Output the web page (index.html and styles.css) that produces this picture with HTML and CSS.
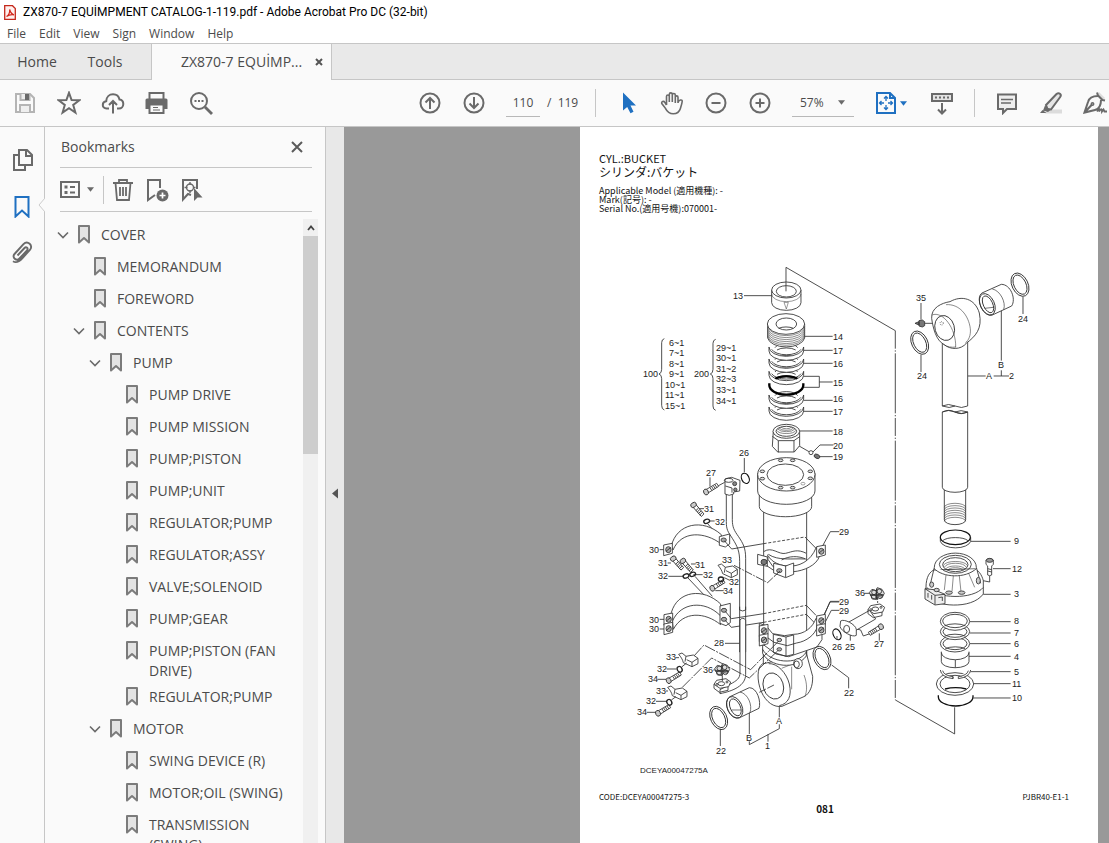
FILE: index.html
```html
<!DOCTYPE html>
<html lang="en">
<head>
<meta charset="utf-8">
<title>ZX870-7 EQUİMPMENT CATALOG-1-119.pdf - Adobe Acrobat Pro DC (32-bit)</title>
<link rel="stylesheet" href="styles.css">
</head>
<body>
<svg class="defs" aria-hidden="true">
  <symbol id="bm" viewBox="0 0 12 19"><path d="M1 1h10v16.5L6 13l-5 4.500z" fill="#e3e3e3" stroke="#7b7b7b" stroke-width="2" stroke-linejoin="round"/></symbol>
  <symbol id="chev" viewBox="0 0 12 8"><path d="M1 1.500l5 5 5-5" fill="none" stroke="#6a6a6a" stroke-width="1.600"/></symbol>
  <symbol id="caret" viewBox="0 0 8 5"><path d="M0 0h8L4 5z" fill="currentColor"/></symbol>
</svg>

<header class="titlebar">
  <svg class="appicon" viewBox="0 0 12 15"><path d="M.7.7h7.800l2.800 2.800v10.800H.7z" fill="#fff0ee" stroke="#c5281c" stroke-width="1.300"/><path d="M2.500 11.500c2-1 3.300-4.200 3.200-7 .8 3 2 4.800 4.300 5.300C7.500 9.300 5 9.800 2.500 11.500z" fill="none" stroke="#d3281c" stroke-width="1.200"/></svg>
  <span>ZX870-7 EQUİMPMENT CATALOG-1-119.pdf - Adobe Acrobat Pro DC (32-bit)</span>
</header>
<nav class="menubar">
  <button>File</button><button>Edit</button><button>View</button><button>Sign</button><button>Window</button><button>Help</button>
</nav>
<div class="tabs">
  <button class="tab home">Home</button><button class="tab tools">Tools</button>
  <div class="tab active"><span>ZX870-7 EQUİMP...</span><button aria-label="Close tab"><svg width="8" height="8" viewBox="0 0 8 8"><path d="M1 1l6 6M7 1L1 7" stroke="#555" stroke-width="2"/></svg></button></div>
</div>

<div class="toolbar">
  <div class="group files">
    <button aria-label="Save"><svg viewBox="0 0 24 24"><g fill="none" stroke="#b4b4b4" stroke-width="2"><path d="M3 3h14l4 4v14H3z"/><path d="M7.500 3v6h9V3M7 21v-7h10v7" fill="#eee"/></g><path d="M13 4h2v4h-2z" fill="#b4b4b4"/></svg></button>
    <button aria-label="Favorite"><svg viewBox="0 0 24 24"><path d="M12 1.800l2.600 7.300 7.800.2-6.200 4.700 2.200 7.500-6.400-4.400-6.400 4.400L7.800 14 1.600 9.300l7.800-.2z"/></svg></button>
    <button aria-label="Upload"><svg viewBox="0 0 24 24"><path d="M8 17.500H5.500C3 17.500 1.800 15.700 1.800 14c0-2 1.500-3.600 3.400-3.800C5.400 6 8.300 3.300 12 3.300c3.300 0 5.900 2.200 6.500 5.200 2.200.3 3.800 2.100 3.800 4.500 0 2.600-2 4.500-4.300 4.500h-2M12 22.500V10.500M8 14l4-4 4 4"/></svg></button>
    <button aria-label="Print"><svg viewBox="0 0 24 24"><path d="M4.500 8V2h14v6"/><path d="M2 7.500h19q1.500 0 1.500 1.500v9h-22V9q0-1.500 1.500-1.500z" fill="#6a6a6a" stroke="none"/><path d="M4.500 13.500h14V22h-14z" fill="#fafafa"/><path d="M8 16.500h5M8 19h7" stroke-width="1"/></svg></button>
    <button aria-label="Search"><svg viewBox="0 0 24 24"><circle cx="10" cy="10" r="8"/><path d="M16 16l7 7" stroke-width="2.800"/><path d="M5.500 10h2M9 10h2M12.500 10h2"/></svg></button>
  </div>
  <div class="group pages">
    <button aria-label="Previous page"><svg viewBox="0 0 24 24"><circle cx="12" cy="12" r="9.500"/><path d="M12 18V7M7.500 11.500L12 7l4.500 4.500"/></svg></button>
    <button aria-label="Next page"><svg viewBox="0 0 24 24"><circle cx="12" cy="12" r="9.500"/><path d="M12 6v11M7.500 12.500L12 17l4.500-4.500"/></svg></button>
    <input class="pageno" aria-label="Page number" value="110"><span class="total">/&nbsp; 119</span>
  </div>
  <div class="group view">
    <button aria-label="Select"><svg viewBox="0 0 24 24"><path d="M7 1.500v18l4.200-3.600 3.300 6.300 3-1.500-3-6.200h5.500z" fill="#1f70c1" stroke="none"/></svg></button>
    <button aria-label="Pan"><svg viewBox="0 0 24 24"><path d="M6.500 14V5.500c0-2 2.800-2 2.800 0V11 3.500c0-2.200 3-2.200 3 0V11 4c0-2 3-2 3 0v8V6.300c0-1.900 2.700-1.900 2.700 0V12c.3-3.500 4.500-4 4.200-1.500-.2 2-1 4.500-1.800 7-1 3.300-3.300 5.300-7.200 5.300-4.400 0-6.300-2.500-7.900-5.700L1.800 12.500c-.8-2 2-2.800 3-1.200l1.700 2.700" stroke-width="1.600"/></svg></button>
    <button aria-label="Zoom out"><svg viewBox="0 0 24 24"><circle cx="12" cy="12" r="9.500"/><path d="M7.500 12h9"/></svg></button>
    <button aria-label="Zoom in"><svg viewBox="0 0 24 24"><circle cx="12" cy="12" r="9.500"/><path d="M7.500 12h9M12 7.500v9"/></svg></button>
    <div class="zoom"><select aria-label="Zoom level"><option>57%</option></select><svg><use href="#caret"/></svg></div>
    <button class="fit" aria-label="Fit page"><svg viewBox="0 0 24 24"><path d="M3 2h13l5 5v15H3z"/><path d="M16 2v5h5"/><path d="M12 6v4M12 14v4M6 12h4M14 12h4M10 7.500l2-2 2 2M10 16.500l2 2 2-2M7.500 10l-2 2 2 2M16.500 10l2 2-2 2" stroke-width="1.300"/></svg><svg class="caret"><use href="#caret"/></svg></button>
    <button class="scroll" aria-label="Scrolling"><svg viewBox="0 0 24 24"><path d="M2 3h20v7H2z" fill="#e3e3e3"/><path d="M5 6.500h2M9 6.500h2M13 6.500h2M17 6.500h2M12 12v10M8 18.500l4 4 4-4"/></svg></button>
  </div>
  <div class="group notes">
    <button aria-label="Comment"><svg viewBox="0 0 24 24"><path d="M3 3.500h18V18h-9l-4 4v-4H3z" fill="#eee"/><path d="M6 8.500h12M6 12h10" stroke-width="1.400"/></svg></button>
    <button aria-label="Highlight"><svg viewBox="0 0 24 24"><path d="M8 18.500h15v4H6z" fill="#dcdcdc" stroke="none"/><path d="M7 14L17.500 3c2.500-2 5.500.5 3.700 3L12 18.500 8.500 18z" fill="#e6e6e6"/><path d="M6 14.500l5.500 4.500-2.500 2-5-1.500zM3.500 19l4 3H1z" fill="#6a6a6a" stroke="none"/></svg></button>
    <button aria-label="Sign"><svg viewBox="0 0 24 24"><path d="M13 4l3-3 6 6-3 3z" fill="#ddd" stroke="none"/><path d="M14 1.500l1 3 4.500 4.500 2.500.5M15 5c-6 0-9 2-10 6L1.500 21.500 12 19c4-1 6-4 6-10M2 21l7-7.500"/><circle cx="9.500" cy="13" r="1.200" stroke-width="1.500"/><path d="M14 20.500c2-4 3-3 2 0 2-3 3-3 3 0l1.500-2 1 2h2.500" stroke-width="1.800"/></svg></button>
  </div>
</div>

<main>
  <aside class="rail">
    <button aria-label="Page thumbnails"><svg viewBox="0 0 24 24"><path d="M9 2h8l5 5v10H9z"/><path d="M16 2v6h6M9 7H4v15h11v-4"/></svg></button>
    <button class="on" aria-label="Bookmarks"><svg viewBox="0 0 24 24"><path d="M5.500 3h13v19.500L12 16.500l-6.500 6z"/></svg></button>
    <button aria-label="Attachments"><svg viewBox="0 0 24 24"><path d="M7.500 15.500l7-7.500c1.800-1.900 4.300.4 2.500 2.300L9.500 18.500c-3 3.200-8-1.200-5-4.500l9-9.800c4-4.200 10.300 1.300 6.400 5.700L12.500 18c-5 5.500-7.500 4.500-9.500 3.200" stroke-width="1.900"/></svg></button>
  </aside>
  <section class="panel">
    <svg class="notch" viewBox="0 0 7 14"><path d="M7 0L1 7l6 7" fill="#fafafa" stroke="#ccc"/></svg>
    <div class="phead"><h2>Bookmarks</h2><button aria-label="Close panel"><svg viewBox="0 0 12 12"><path d="M1 1l10 10M11 1L1 11"/></svg></button></div>
    <div class="ptools">
      <button aria-label="Options"><svg class="opt" viewBox="0 0 20 18"><path d="M1 1h18v15H1z"/><path d="M10 6h5M10 11.500h5"/><path d="M4.500 4.500h3v3h-3zM4.500 10h3v3h-3z" fill="#6a6a6a" stroke="none"/></svg><svg class="caret"><use href="#caret"/></svg></button>
      <i></i>
      <button aria-label="Delete"><svg viewBox="0 0 24 24"><path d="M2 5h20M8 5V2h8v3M4.500 5l1.500 17h12l1.500-17M9 9v9M12 9v9M15 9v9" stroke-width="1.800"/></svg></button>
      <button aria-label="New bookmark"><svg viewBox="0 0 24 24"><path d="M10 17l-7 5V2h12v8"/><circle cx="17.500" cy="17.500" r="6" fill="#6a6a6a" stroke="none"/><path d="M14.500 17.500h6M17.500 14.500v6" stroke="#fff" stroke-width="1.700"/></svg></button>
      <button aria-label="Find bookmark"><svg viewBox="0 0 24 24"><path d="M12 17l-3-1-5 5.500V2h14v9"/><circle cx="11" cy="9.500" r="3.500" stroke-width="1.400"/><path d="M11 4v3M11 12v3M5.500 9.500h3M14 9.500h2.500" stroke-width="1.400"/><path d="M15 10v13l3.500-3.500h5z" fill="#6a6a6a" stroke="none"/></svg></button>
    </div>
    <div class="scroller">
      <ul class="tree">
        <li><div class="row"><svg class="chev"><use href="#chev"/></svg><svg class="bm"><use href="#bm"/></svg><span>COVER</span></div>
          <ul>
            <li><div class="row leaf"><svg class="bm"><use href="#bm"/></svg><span>MEMORANDUM</span></div></li>
            <li><div class="row leaf"><svg class="bm"><use href="#bm"/></svg><span>FOREWORD</span></div></li>
            <li><div class="row"><svg class="chev"><use href="#chev"/></svg><svg class="bm"><use href="#bm"/></svg><span>CONTENTS</span></div>
              <ul>
                <li><div class="row"><svg class="chev"><use href="#chev"/></svg><svg class="bm"><use href="#bm"/></svg><span>PUMP</span></div>
                  <ul>
                    <li><div class="row leaf"><svg class="bm"><use href="#bm"/></svg><span>PUMP DRIVE</span></div></li>
                    <li><div class="row leaf"><svg class="bm"><use href="#bm"/></svg><span>PUMP MISSION</span></div></li>
                    <li><div class="row leaf"><svg class="bm"><use href="#bm"/></svg><span>PUMP;PISTON</span></div></li>
                    <li><div class="row leaf"><svg class="bm"><use href="#bm"/></svg><span>PUMP;UNIT</span></div></li>
                    <li><div class="row leaf"><svg class="bm"><use href="#bm"/></svg><span>REGULATOR;PUMP</span></div></li>
                    <li><div class="row leaf"><svg class="bm"><use href="#bm"/></svg><span>REGULATOR;ASSY</span></div></li>
                    <li><div class="row leaf"><svg class="bm"><use href="#bm"/></svg><span>VALVE;SOLENOID</span></div></li>
                    <li><div class="row leaf"><svg class="bm"><use href="#bm"/></svg><span>PUMP;GEAR</span></div></li>
                    <li><div class="row leaf"><svg class="bm"><use href="#bm"/></svg><span>PUMP;PISTON (FAN DRIVE)</span></div></li>
                    <li><div class="row leaf"><svg class="bm"><use href="#bm"/></svg><span>REGULATOR;PUMP</span></div></li>
                  </ul></li>
                <li><div class="row"><svg class="chev"><use href="#chev"/></svg><svg class="bm"><use href="#bm"/></svg><span>MOTOR</span></div>
                  <ul>
                    <li><div class="row leaf"><svg class="bm"><use href="#bm"/></svg><span>SWING DEVICE (R)</span></div></li>
                    <li><div class="row leaf"><svg class="bm"><use href="#bm"/></svg><span>MOTOR;OIL (SWING)</span></div></li>
                    <li><div class="row leaf"><svg class="bm"><use href="#bm"/></svg><span>TRANSMISSION (SWING)</span></div></li>
                  </ul></li>
              </ul></li>
          </ul></li>
      </ul>
      <div class="bar"><div class="up"><svg viewBox="0 0 8 6"><path d="M1 5l3-3.500L7 5" fill="none" stroke="#444" stroke-width="1.800"/></svg></div><div class="thumb"></div></div>
    </div>
  </section>
  <button class="collapse" aria-label="Collapse panel"><svg viewBox="0 0 6 10"><path d="M6 0v10L0 5z" fill="#555"/></svg></button>
  <section class="canvas">
    <article class="page">
      <h1>CYL.:BUCKET</h1>
      <p class="jp" lang="ja">シリンダ:バケット</p>
      <p class="meta first" lang="ja">Applicable Model (適用機種): -</p>
      <p class="meta" lang="ja">Mark(記号): -</p>
      <p class="meta" lang="ja">Serial No.(適用号機):070001-</p>
      <svg class="drawing" viewBox="580 250 518 530" role="img" aria-label="Bucket cylinder exploded view">
        <defs>
          <g id="seal"><path d="M-52-4v12a52 28 0 0 0 104 0V-4A52 28 0 0 1-52-4z" fill="#fff"/><path d="M-44 3a46 23 0 0 0 88 0M-34-2a36 18 0 0 1 68 0M-28 5a32 12 0 0 1 56 0"/></g>
          <g id="tilt"><ellipse rx="24" ry="37" transform="rotate(-26)"/><ellipse rx="18" ry="31" transform="rotate(-26)"/></g>
          <g id="bolt"><path d="M-8-3l32-19 6 9L-2 7z" fill="#fff"/><path d="M4-9l6 9M9-12l6 9M14-15l6 9M19-18l6 9"/><ellipse cx="-8" cy="4" rx="7" ry="9" transform="rotate(-25 -8 4)" fill="#ccc"/></g>
          <g id="ear"><path d="M-14-14l26-5v30l-26 7z" fill="#fff"/><ellipse cx="0" cy="0" rx="8" ry="9" fill="#aaa"/><path d="M-7 5L7-6"/></g>
          <g id="flange"><path d="M-24 0l8-12 28-5 14 10-6 14-26 5z" fill="#fff"/><path d="M-24 0v12l16 12 26-6V7"/><ellipse cx="-2" cy="-2" rx="10" ry="6"/><circle cx="-15" cy="0" r="3"/><circle cx="15" cy="-7" r="3"/></g>
          <g id="knot"><path d="M-22-4l8-10 12 4 4-9 14 5 7 12-6 12-12-2-6 9-13-5z" fill="#ddd"/><circle cx="-8" cy="-5" r="7"/><circle cx="8" cy="-8" r="7"/><circle cx="10" cy="7" r="7"/><circle cx="-9" cy="9" r="7"/><path d="M-20 3h40M0-16v32" stroke-width="4"/></g>
          <g id="block"><path d="M-28-14l10-4 12 10 22-4 14 10v16l-18 9-26-12c-2-10-8-18-14-25z" fill="#fff"/><path d="M-6-8l-3 16M-4 2l16 8 18-12M12 10v13"/></g>
        </defs>

        <g class="ink" transform="translate(630 260) scale(.3333)">
          <path d="M796 212v1108" stroke-dasharray="54 5 4 5 180 5 4 5"/>
          <path d="M796 1320l178 102v-80M342 107h84M524 229h84M520 271h88M520 310h88M520 349h48v33h-48M568 366h40M520 421h88M520 454h88M508 513h100M610 555h-40l-22 22M608 590h-38M502 555l35 20"/>
          <path d="M468 22l328 190"/>
          <path d="M425 90v38a44 23 0 0 0 88 0V90" fill="#fff"/><ellipse cx="469" cy="90" rx="44" ry="24" fill="#fff"/><ellipse cx="469" cy="94" rx="30" ry="17"/><path d="M425 102a44 23 0 0 0 88 0M462 127h13l-6 20z" stroke-width="1.500"/><path d="M468 22v72"/>
          <use href="#seal" x="469" y="445"/><use href="#seal" x="469" y="409"/>
          <path d="M418 370v6a51 28 0 0 0 102 0v-6" stroke="#000" stroke-width="7"/><path d="M436 358a38 18 0 0 1 66 0" stroke="#000" stroke-width="6"/>
          <use href="#seal" x="469" y="338"/><use href="#seal" x="469" y="301"/><use href="#seal" x="469" y="265"/>
          <path d="M436 356a38 14 0 0 1 66 0" stroke="#000" stroke-width="6"/>
          <path d="M413 192v42a56 31 0 0 0 111 0v-42" fill="#fff"/><path d="M413 200a56 31 0 0 0 111 0M413 206a56 31 0 0 0 111 0M413 212a56 31 0 0 0 111 0M413 218a56 31 0 0 0 111 0M413 224a56 31 0 0 0 111 0M413 229a56 31 0 0 0 111 0" stroke-width="1.700"/><ellipse cx="468" cy="192" rx="56" ry="31" fill="#fff"/><ellipse cx="469" cy="192" rx="31" ry="18"/><path d="M446 205a30 13 0 0 1 44 0"/>
          <path d="M430 514l-3 45 16 17h50l16-19v-43z" fill="#fff"/><path d="M427 529l18 13h47l17-12M445 542v35M492 542v34"/><ellipse cx="469" cy="514" rx="40" ry="21" fill="#fff"/><ellipse cx="469" cy="514" rx="31" ry="15"/><path d="M440 511a30 13 0 0 0 58 0M443 507a28 13 0 0 0 52 0M447 504a24 12 0 0 0 44 0M453 501a18 10 0 0 0 32 0" stroke-width="1.700"/>
          <circle cx="543" cy="578" r="6" fill="#fff"/><ellipse cx="561" cy="589" rx="9" ry="6" fill="#777" transform="rotate(25 561 589)"/>
          <path d="M103 236q-8 2-8 12v80q0 12-8 14 8 2 8 14v80q0 12 8 14M257 238q-8 2-8 12v78q0 12-8 14 8 2 8 14v82q0 11 8 13"/>
        </g>

        <g class="ink" transform="translate(630 440) scale(.3333)">
          <path d="M401 205v490M530 205v500"/>
          <path d="M388 160v40a78 30 0 0 0 157 0v-40" fill="#fff"/><path d="M383 100v53a86 40 0 0 0 172 0v-53" fill="#fff"/><ellipse cx="469" cy="103" rx="86" ry="50" fill="#fff"/><ellipse cx="466" cy="104" rx="55" ry="32"/>
          <g fill="#ddd"><ellipse cx="452" cy="61" rx="7" ry="4"/><ellipse cx="488" cy="61" rx="7" ry="4"/><ellipse cx="397" cy="94" rx="7" ry="4"/><ellipse cx="541" cy="94" rx="7" ry="4"/><ellipse cx="397" cy="116" rx="7" ry="4"/><ellipse cx="541" cy="115" rx="7" ry="4"/><ellipse cx="452" cy="143" rx="7" ry="4"/><ellipse cx="488" cy="143" rx="7" ry="4"/></g><ellipse cx="519" cy="131" rx="6" ry="4" stroke-width="1.300"/>
          <path d="M343 54v43M240 112v28M262 139l22-12M207 206h15M240 243h14M232 250l14 16M89 329h14M113 369h10M183 372h14M115 409h47M190 404h28M283 413l16 8M256 452h25M628 275h-27l-26 48M703 460h18M628 486h-28l-25 56"/>
          <ellipse cx="346" cy="115" rx="11" ry="16" transform="rotate(-25 346 115)" stroke="#111" stroke-width="3.500"/>
          <path d="M289 160v85c0 25 5 30 18 50 16 25 22 40 22 70v145q9 6 18 0V355c0-30-7-44-22-66-12-17-18-27-18-50v-79" fill="#fff"/><path d="M285 120v42q12 8 26 0v-6l18-3 1-32-25-9-18 4z" fill="#fff"/><ellipse cx="296" cy="121" rx="13" ry="6"/><circle cx="314" cy="131" r="6" fill="#888"/><circle cx="316" cy="149" r="5" fill="#888"/><path d="M286 138l20 6v14"/>
          <path d="M329 500v136q9 6 18 0V500"/>
          <use href="#bolt" x="236" y="152"/>
          <use href="#bolt" transform="translate(196 202) rotate(80)"/><use href="#bolt" transform="translate(135 363) rotate(80)"/><use href="#bolt" transform="translate(164 370) rotate(80)"/><use href="#bolt" x="255" y="441"/>
          <g stroke="#222" stroke-width="4"><ellipse cx="230" cy="244" rx="9" ry="6" transform="rotate(-20 230 244)"/><ellipse cx="168" cy="408" rx="9" ry="6" transform="rotate(-20 168 408)"/><ellipse cx="188" cy="403" rx="9" ry="6" transform="rotate(-20 188 403)"/><ellipse cx="273" cy="418" rx="8" ry="7"/></g>
          <path d="M174 414l54 57M195 409l52 60"/>
          <path d="M124 318C140 250 218 234 274 284v28C225 275 155 270 129 330z" fill="#fff"/><use href="#ear" x="115" y="329"/><path d="M268 290l31-8v30l-13 9-18-5z" fill="#fff"/><ellipse cx="281" cy="300" rx="8" ry="6" fill="#aaa"/><path d="M283 302l22 25 96-16"/><path d="M401 311l124-20" stroke-dasharray="9 5"/><path d="M525 291l34 35"/>
          <use href="#block" x="292" y="390"/><path d="M312 376l101 52 37-35" stroke-dasharray="24 4 5 4"/>
          <path d="M413 337c-2 40 110 75 146-15l10 25c-8 30-50 46-78 48l-62-15-15-22z" fill="#fff"/>
          <path d="M401 335c25-17 45 10 66 5s35-14 62 0c-10 30-90 40-120 0" fill="#fff" stroke="none"/><path d="M401 335c25-17 45 10 66 5s35-14 62 0M415 343c30 20 70 12 110 14M455 360c20-12 50-14 74-2"/>
          <path d="M431 370l36 8 24-9v34l-24 10-36-14z" fill="#fff"/><path d="M467 378v34"/><ellipse cx="448" cy="392" rx="8" ry="6" fill="#aaa"/><path d="M383 343l29 8v28l-29-6z" fill="#fff"/><ellipse cx="402" cy="366" rx="9" ry="8" fill="#777"/><use href="#ear" x="574" y="334"/><path d="M450 393l-16 15M410 377l21 14"/>
          <use href="#knot" x="740" y="462"/>
        </g>

        <g class="ink" transform="translate(630 590) scale(.3333)">
          <path d="M628 34h-27l-27 58M628 61h-24l-30 58M89 88h14M89 117h14M285 160h44M137 203h10M110 237h28M82 268h28M250 240h8M107 303h7M78 334h32M50 367h28M621 148v-10M661 152v-22M748 152v-22M734 126l-34 12-8-18-16-4M605 225l51 38v32M448 350v32M448 403v13l-90 48v-10M414 433v22M358 344v88M271 416v52"/>
          <path d="M124 68C142 2 220-8 272 42v62C225 66 160 62 130 118z" fill="#fff"/><path d="M127 94C152 36 224 30 270 76"/><use href="#ear" x="116" y="88"/><use href="#ear" x="116" y="116"/><path d="M270 48l31-8v58l-13 9-18-7z" fill="#fff"/><ellipse cx="282" cy="61" rx="8" ry="6" fill="#aaa"/><ellipse cx="282" cy="88" rx="8" ry="6" fill="#aaa"/><path d="M286 64l18 22 97-15M286 91l18 21 97-15"/><path d="M401 71l128-25M401 97l128-24" stroke-dasharray="9 5"/><path d="M529 46l29 30M529 73l29 30"/>
          <path d="M330 90v158c0 18-10 24-30 35l-30 16v12c40-8 77-24 77-58V90q-9-10-17 0z" fill="#fff"/>
          <path d="M402 150l-4 70v60h131v-130z" fill="#fff" stroke="none"/><path d="M400 170v70M530 180v70"/>
          <path d="M397 222c-16 10-17 50-3 83 14 32 38 48 62 44l68-30c15-9 25-30 24-60l-22-80-20 33-50-4z" fill="#fff"/><path d="M448 347c28-6 38-30 30-65-8-33-36-63-62-61"/><path d="M485 230v68M524 320c8-15 8-40-2-65M455 235l30-12" stroke-width="1.700"/><ellipse cx="430" cy="288" rx="30" ry="40" transform="rotate(-18 430 288)"/><path d="M388 307l46-23" stroke-dasharray="22 5"/>
          <path d="M398 165v25c20 40 100 52 131 8v-30z" fill="#fff"/><path d="M398 178c20 40 105 50 131 8"/>
          <ellipse cx="504" cy="221" rx="13" ry="15" fill="#fff"/><ellipse cx="500" cy="223" rx="8" ry="10"/>
          <path d="M388 100v55l50 37 38 8 85-29 15-22V88l-18-3c-10 28-35 48-68 48l-26 4-36-6-20-24z" fill="#fff"/><path d="M388 125l44 32 40 10 28-8c30-5 56-25 62-50M430 133l38 8 23-6v58l-23 6-38-12zM468 141v58"/><use href="#ear" x="402" y="122"/><use href="#ear" x="402" y="150"/><use href="#ear" x="574" y="92"/><use href="#ear" x="574" y="120"/><ellipse cx="448" cy="150" rx="7" ry="5" fill="#bbb"/><ellipse cx="448" cy="178" rx="7" ry="5" fill="#bbb"/>
          <path d="M192 198l30-33 140 74 86-88M157 292l88-88 113 60 90-86" stroke-dasharray="34 4 6 4"/>
          <use href="#block" x="174" y="207"/><use href="#block" x="141" y="306"/>
          <use href="#bolt" x="124" y="268"/><use href="#bolt" x="92" y="366"/><use href="#bolt" transform="translate(745 114) rotate(180)"/>
          <g stroke="#222" stroke-width="4"><ellipse cx="149" cy="238" rx="7" ry="9" transform="rotate(-30 149 238)"/><ellipse cx="118" cy="337" rx="7" ry="9" transform="rotate(-30 118 337)"/></g><path d="M155 231l15-12M124 330l14-10"/>
          <use href="#knot" x="276" y="240"/><use href="#flange" x="276" y="283"/><path d="M277 256v18"/>
          <use href="#tilt" x="576" y="204"/><use href="#tilt" x="266" y="384"/>
          <path d="M300 320l58-27c24 0 36 43 29 62l-60 29c-30 5-50-50-27-64z" fill="#fff"/><ellipse cx="314" cy="352" rx="22" ry="34" transform="rotate(-25 314 352)"/><ellipse cx="316" cy="352" rx="15" ry="27" transform="rotate(-25 316 352)"/><path d="M330 306c24 5 38 39 30 62M304 360h28" stroke-width="2"/>
          <ellipse cx="621" cy="133" rx="11" ry="17" transform="rotate(-25 621 133)" stroke="#111" stroke-width="3.500"/>
          <path d="M655 97l64-36 18 26-66 38z" fill="#fff"/><path d="M632 93c10-8 45 10 47 25v18c-10 8-46-12-49-27z" fill="#fff"/><ellipse cx="650" cy="117" rx="9" ry="11"/><use href="#flange" x="738" y="59"/><path d="M743 24v18" stroke-dasharray="6 3"/>
        </g>

        <g class="ink" transform="translate(890 260) scale(.3333)">
          <path d="M93 129v50M104 190h24M93 284v52M399 110v52M334 150v152M334 331v17M233 348h54M311 348h46"/>
          <path d="M157 240v198q18-9 38 0t38 0V240" fill="#fff"/><path d="M157 456v226a38 15 0 0 0 76 0V456q-18 9-38 0t-38 0z" fill="#fff"/><path d="M157 456q20-10 38 0t38 0q-20-8-38 0M157 438q22 9 38 0M163 690v90a32 14 0 0 0 64 0v-90"/><path d="M163 742a32 12 0 0 1 64 0M163 749a32 12 0 0 1 64 0M163 756a32 12 0 0 1 64 0M163 763a32 12 0 0 1 64 0M163 770a32 12 0 0 1 64 0M163 777a32 12 0 0 1 64 0M163 784a32 12 0 0 1 64 0" stroke-width="1.700"/>
          <path d="M125 175c-2-32 30-46 55-50 35-20 75-10 88 34 10 48-12 70-38 90-18 22-50 20-67 5-25-12-34-50-38-79z" fill="#fff"/><path d="M168 134c40-3 68 32 73 72 2 20-5 35-15 43M126 165c32-13 73 40 71 97M160 253c10 8 25 10 38 8" stroke-width="1.700"/><ellipse cx="164" cy="204" rx="29" ry="38" transform="rotate(-16 164 204)"/><circle cx="155" cy="190" r="5" stroke-dasharray="2 3"/>
          <path d="M75 190l12-5v10zM87 182l10-2 7 5v12l-7 4-10-3z" fill="#777"/>
          <use href="#tilt" x="89" y="248"/><use href="#tilt" x="390" y="74"/>
          <path d="M276 99l58-26c28 0 45 44 31 65l-60 28c-27 3-50-53-29-67z" fill="#fff"/><ellipse cx="292" cy="133" rx="21" ry="34" transform="rotate(-25 292 133)"/><ellipse cx="294" cy="133" rx="14" ry="27" transform="rotate(-25 294 133)"/><path d="M307 87c23 4 42 40 34 62M284 145l26-3" stroke-width="2"/>
        </g>

        <g class="ink" transform="translate(890 520) scale(.3333)">
          <path d="M243 64h119M309 146h53M280 223h82M240 305h122M240 339h122M240 371h122M237 409h125M242 455h120M251 491h111M250 534h112M299 168v18l-30-6"/>
          <path d="M151 52v12a46 23 0 0 0 91 0V52" fill="#fff"/><ellipse cx="196" cy="52" rx="45" ry="22" stroke="#111" stroke-width="3.500"/><path d="M158 62a42 16 0 0 1 76 0"/>
          <path d="M131 150c-18 10-24 30-23 62l5 20c20 25 130 40 167-10v-40c-5-20-17-32-25-36z" fill="#fff"/><path d="M133 142a62 42 0 0 1 126 0l13 48M133 142l-13 55M132 145c25 28 95 32 128 0M110 202c30 35 140 38 170 0" fill="#fff"/><path d="M168 165l-5 45M190 168l-4 47M208 168l5 47M236 160l18 42" stroke-width="1.700"/><ellipse cx="196" cy="133" rx="48" ry="27"/><ellipse cx="196" cy="134" rx="38" ry="21"/><path d="M160 136a38 17 0 0 1 72 0M163 142a34 16 0 0 1 66 0M167 147a31 14 0 0 1 58 0M173 151a24 11 0 0 1 46 0" stroke-width="1.700"/>
          <path d="M105 206l27 3 33 14v28l-30 4-30-18z" fill="#eee"/><path d="M135 226v28M105 206l30 20 30-3M114 219v14M125 225v14M145 233l12-2v12"/><g fill="#ccc"><ellipse cx="177" cy="218" rx="10" ry="5"/><ellipse cx="215" cy="218" rx="10" ry="5"/><ellipse cx="125" cy="194" rx="6" ry="8"/><ellipse cx="265" cy="182" rx="6" ry="10"/><ellipse cx="140" cy="210" rx="8" ry="5"/></g>
          <path d="M288 120v13l5 5v27q6 4 12 0v-27l5-5v-13q-11-8-22 0z" fill="#fff"/><ellipse cx="299" cy="121" rx="10" ry="6" fill="#999"/><path d="M293 146l12 3M293 153l12 3"/>
          <path d="M145 526v4a52 28 0 0 0 104 0v-4" stroke="#111" stroke-width="4"/><ellipse cx="195" cy="492" rx="56" ry="34" fill="#fff"/><ellipse cx="195" cy="492" rx="45" ry="26"/><path d="M165 507a50 16 0 0 1 64 0" stroke="#111" stroke-width="4"/>
          <path d="M151 450a45 27 0 0 0 38 26v-6a38 20 0 0 1-31-18M205 476a45 27 0 0 0 37-26M205 470a38 20 0 0 0 30-18M189 470v6M205 470v6" fill="#fff"/><path d="M154 395v30a41 18 0 0 0 83 0v-30" fill="#fff"/><path d="M154 398a41 21 0 0 0 83 0M196 420v23"/>
          <g fill="#fff"><ellipse cx="195" cy="371" rx="44" ry="25"/><ellipse cx="195" cy="371" rx="36" ry="18"/><ellipse cx="195" cy="335" rx="44" ry="24"/><ellipse cx="195" cy="335" rx="36" ry="17"/><ellipse cx="195" cy="304" rx="44" ry="27"/><ellipse cx="195" cy="303" rx="37" ry="20"/></g><path d="M163 318a38 14 0 0 1 64 0M163 349a38 14 0 0 1 64 0M166 386a38 14 0 0 1 60 0"/>
        </g>

        <g class="labels">
          <text x="733" y="299">13</text><text x="833" y="340">14</text><text x="833" y="354">17</text><text x="833" y="367">16</text><text x="833" y="386">15</text><text x="833" y="402">16</text><text x="833" y="415">17</text><text x="833" y="435">18</text><text x="833" y="449">20</text><text x="833" y="460">19</text><text x="739" y="456">26</text>
          <text x="643" y="377">100</text><text x="669" y="346">6~1</text><text x="669" y="356">7~1</text><text x="669" y="367">8~1</text><text x="669" y="377">9~1</text><text x="665" y="388">10~1</text><text x="665" y="398">11~1</text><text x="665" y="409">15~1</text>
          <text x="694" y="377">200</text><text x="716" y="351">29~1</text><text x="716" y="361">30~1</text><text x="716" y="372">31~2</text><text x="716" y="382">32~3</text><text x="716" y="393">33~1</text><text x="716" y="404">34~1</text>
          <text x="706" y="476">27</text><text x="704" y="512">31</text><text x="715" y="525">32</text><text x="649" y="553">30</text><text x="658" y="566">31</text><text x="722" y="563">33</text><text x="695" y="568">31</text><text x="658" y="579">32</text><text x="703" y="578">32</text><text x="729" y="585">32</text><text x="723" y="594">34</text><text x="839" y="535">29</text><text x="855" y="596">36</text><text x="839" y="605">29</text>
          <text x="839" y="614">29</text><text x="649" y="623">30</text><text x="649" y="632">30</text><text x="714" y="646">28</text><text x="666" y="660">33</text><text x="657" y="672">32</text><text x="648" y="682">34</text><text x="703" y="673">36</text><text x="656" y="694">33</text><text x="646" y="704">32</text><text x="637" y="715">34</text><text x="832" y="650">26</text><text x="845" y="650">25</text><text x="874" y="647">27</text><text x="844" y="696">22</text><text x="776" y="724">A</text><text x="746" y="741">B</text><text x="765" y="749">1</text><text x="716" y="754">22</text>
          <text x="916" y="301">35</text><text x="1018" y="322">24</text><text x="917" y="379">24</text><text x="998" y="368">B</text><text x="986" y="379">A</text><text x="1009" y="379">2</text>
          <text x="1014" y="544">9</text><text x="1012" y="572">12</text><text x="1014" y="597">3</text><text x="1014" y="624">8</text><text x="1014" y="636">7</text><text x="1014" y="647">6</text><text x="1014" y="660">4</text><text x="1014" y="675">5</text><text x="1012" y="687">11</text><text x="1012" y="701">10</text>
          <text class="code" x="640" y="773">DCEYA00047275A</text>
        </g>
      </svg>
      <footer><span>CODE:DCEYA00047275-3</span><span>PJBR40-E1-1</span></footer>
      <p class="number">081</p>
    </article>
  </section>
</main>
</body>
</html>
```
FILE: styles.css
```css
* { box-sizing: border-box; }
body {
  margin: 0;
  height: 100vh;
  display: flex;
  flex-direction: column;
  overflow: hidden;
  background: #fafafa;
  color: #4b4b4b;
  font: 12px/16px "Open Sans", "Noto Sans", sans-serif;
}
button {
  border: 0;
  padding: 0;
  background: none;
  color: inherit;
  font: inherit;
}
h1, h2, p, ul { margin: 0; padding: 0; font-weight: 400; }
.defs { position: absolute; width: 0; height: 0; }

.titlebar {
  display: flex;
  align-items: center;
  gap: 7px;
  height: 24px;
  flex: none;
  padding-left: 4px;
  background: #fff;
  color: #000;
  font-family: Roboto, "Open Sans", sans-serif;
}
.appicon { width: 12px; height: 15px; }
.menubar {
  display: flex;
  gap: 13px;
  height: 19px;
  flex: none;
  padding-left: 7px;
  background: #fff;
}

.tabs {
  display: flex;
  height: 37px;
  flex: none;
  border-top: 1px solid #c6c6c6;
  border-bottom: 1px solid #c6c6c6;
  background: #e9e9e9;
}
.tab { font-size: 14px; }
.home { width: 74px; flex: none; }
.tools { width: 77px; flex: none; padding-right: 15px; }
.active {
  display: flex;
  align-items: center;
  justify-content: space-between;
  width: 181px;
  height: 36px;
  padding: 0 8px 0 29px;
  background: #fafafa;
  border: solid #c6c6c6;
  border-width: 0 1px;
}
.active button { display: flex; }

.toolbar {
  display: flex;
  align-items: center;
  height: 47px;
  flex: none;
  padding-left: 3px;
  border-bottom: 1px solid #c6c6c6;
  background: #fafafa;
}
.group { display: flex; align-items: center; flex: none; }
.group button { display: flex; justify-content: center; align-items: center; width: 44px; height: 44px; }
.toolbar svg, .rail svg, .ptools svg {
  width: 24px;
  height: 24px;
  flex: none;
  fill: none;
  stroke: #6a6a6a;
  stroke-width: 2;
}
.pages { margin-left: 185px; }
.pageno {
  width: 34px;
  height: 28px;
  margin: 0 7px 0 10px;
  padding: 0 0 1px;
  border: 0;
  border-bottom: 1px solid #b8b8b8;
  background: none;
  color: inherit;
  font: inherit;
  text-align: center;
}
.total { width: 41px; }
.view { padding-left: 10px; margin-left: 7px; }
.view, .notes { border-left: 1px solid #c6c6c6; height: 28px; }
.zoom {
  display: flex;
  align-items: center;
  width: 62px;
  height: 28px;
  margin: 0 14px 0 10px;
  border-bottom: 1px solid #b8b8b8;
}
.zoom select {
  appearance: none;
  width: 46px;
  padding: 0 0 0 8px;
  border: 0;
  background: none;
  color: inherit;
  font: inherit;
}
.toolbar .zoom svg, .toolbar .caret, .ptools .caret { width: 7px; height: 5px; stroke: none; color: #6a6a6a; }
.fit { gap: 2px; }
.toolbar .fit svg { stroke: #1f70c1; }
.toolbar .fit .caret { color: #1f70c1; stroke: none; }
.scroll { margin: 0 10px 0 8px; }
.notes { padding-left: 10px; }

main { display: flex; flex: 1; min-height: 0; }
.rail {
  display: flex;
  flex-direction: column;
  width: 45px;
  flex: none;
  padding-top: 10px;
  border-right: 1px solid #c6c6c6;
}
.rail button { display: flex; align-items: center; justify-content: center; height: 46px; }
.rail .on svg { stroke: #1f70c1; }

.panel {
  position: relative;
  display: flex;
  flex-direction: column;
  width: 281px;
  flex: none;
  padding-left: 15px;
  border-right: 1px solid #c6c6c6;
}
.notch { position: absolute; left: -7px; top: 71px; width: 7px; height: 14px; }
.phead {
  display: flex;
  align-items: center;
  justify-content: space-between;
  height: 41px;
  flex: none;
  margin-right: 13px;
  padding: 0 9px 0 1px;
  border-bottom: 1px solid #c6c6c6;
}
h2 { font-size: 14px; }
.phead button { display: flex; }
.phead svg { width: 12px; height: 12px; stroke: #5b5b5b; stroke-width: 2; }
.ptools {
  display: flex;
  align-items: center;
  height: 44px;
  flex: none;
  margin-right: 13px;
  border-bottom: 1px solid #c6c6c6;
}
.ptools button { display: flex; align-items: center; gap: 7px; margin-right: 10px; }
.ptools .opt { width: 20px; height: 18px; }
.ptools i { width: 1px; height: 28px; margin-right: 7px; margin-left: -1px; background: #c6c6c6; }

.scroller { display: flex; flex: 1; min-height: 0; margin-top: 7px; padding-right: 7px; }
.tree { flex: 1; margin-left: -4px; overflow: hidden; font-size: 14px; line-height: 20px; list-style: none; }
.tree ul { padding-left: 16px; list-style: none; }
.row { display: flex; min-height: 32px; padding: 6px 8px 0 0; }
.row .chev { width: 14px; height: 8px; margin: 6px 8px 0 0; flex: none; }
.row .bm { width: 12px; height: 19px; margin-right: 11px; flex: none; }
.leaf { padding-left: 22px; }
.bar { width: 15px; flex: none; background: #f0f0f0; }
.up { display: flex; align-items: center; justify-content: center; height: 17px; }
.up svg { width: 8px; height: 6px; }
.thumb { height: 35%; background: #cdcdcd; }

.collapse { width: 18px; flex: none; background: #e8e8e8; padding-top: 20px; }
.collapse svg { width: 6px; height: 11px; }
.canvas { display: flex; flex: 1; min-width: 0; padding: 0 11px 0 236px; background: #999; }
.page { flex: 1; min-width: 0; padding: 24px 0 0; background: #fff; color: #111; font-family: "Noto Sans CJK JP", sans-serif; }
.page h1, .page p { margin-left: 19px; }
h1 { font-size: 11px; line-height: 14px; }
.jp { font-size: 12px; line-height: 14px; }
.meta { font-size: 9px; line-height: 9px; }
.page .first { margin-top: 7px; }
.drawing { display: block; width: 100%; margin-top: 37px; }
.ink { fill: none; stroke: #333; stroke-width: 2.6; }
.labels { fill: #222; font: 9px "Liberation Sans", Arial, sans-serif; }
.code { font-size: 8px; }
footer { display: flex; justify-content: space-between; margin: 11px 29px 0 19px; font-size: 8px; line-height: 12px; }
.page .number { margin: 0 28px 0 0; text-align: center; font-size: 10px; line-height: 12px; font-weight: 700; }
```
